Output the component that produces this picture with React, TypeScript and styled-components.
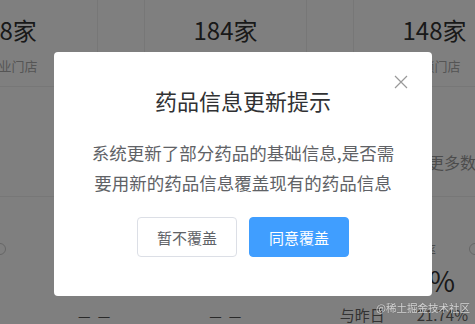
import React from 'react';
import styled, { createGlobalStyle } from 'styled-components';

const GlobalStyle = createGlobalStyle`
    html, body {
        margin: 0;
        padding: 0;
        height: 100%;
        overflow: hidden;
        background: #fff;
        font-family: "Noto Sans CJK SC", "Noto Sans", sans-serif;
    }
`;

const Page = styled.div`
    width: 475px;
    height: 324px;
    overflow: hidden;
    color: #333;
`;

const StatRow = styled.div`
    display: flex;
    gap: 46px;
    margin-left: -65px;
    height: 86px;
    border-bottom: 1px solid #eee;
`;

const StatCell = styled.div<{ $shift?: number }>`
    flex: 0 0 163px;
    box-sizing: border-box;
    border-left: 1px solid #eee;
    border-right: 1px solid #eee;
    display: flex;
    flex-direction: column;
    align-items: center;
    padding: 13px ${p => p.$shift || 0}px 0 0;
`;

const StatValue = styled.div`
    font-size: 24px;
    line-height: 34px;
    color: #333;
`;

const StatLabel = styled.div`
    margin-top: 10px;
    font-size: 13px;
    line-height: 18px;
    color: #aaa;
`;

const MoreRow = styled.div`
    height: 110px;
    border-bottom: 1px solid #eee;
    display: flex;
    align-items: center;
    padding: 40px 0 0 396px;
    box-sizing: border-box;
    font-size: 16px;
    color: #999;
    white-space: nowrap;
`;

const RateRow = styled.div`
    height: 104px;
    display: flex;
    align-items: flex-start;
    justify-content: space-between;
    padding-top: 46px;
    box-sizing: border-box;
    margin: 0 -6px;
`;

const Dot = styled.span`
    width: 12px;
    height: 12px;
    border-radius: 50%;
    border: 1px solid #ccc;
    box-sizing: border-box;
`;

const RateBlock = styled.div`
    display: flex;
    flex-direction: column;
    align-items: flex-end;
    margin-left: auto;
    margin-right: 14px;
`;

const RateTitle = styled.div`
    margin-right: 19px;
    font-size: 13px;
    line-height: 14px;
    color: #999;
`;

const RateValue = styled.div`
    margin-top: 3px;
    font-size: 28px;
    line-height: 40px;
    color: #333;
`;

const FootRow = styled.div`
    display: flex;
    align-items: center;
    font-size: 14px;
    line-height: 20px;
    color: #666;
    white-space: nowrap;
    margin-top: 4px;
`;

const Dash = styled.span<{ $left: number }>`
    margin-left: ${p => p.$left}px;
    color: #555;
    letter-spacing: 2px;
`;

const Compare = styled.span`
    margin-left: auto;
    font-size: 15px;
`;

const CompareValue = styled.span`
    margin-left: 32px;
    margin-right: 7px;
    font-size: 15px;
`;

const Watermark = styled.div`
    position: fixed;
    left: 376px;
    top: 300px;
    font-size: 10.5px;
    color: rgba(255, 255, 255, 0.75);
    text-shadow: 0 0 1px rgba(0, 0, 0, 0.4);
    z-index: 2;
`;

const Overlay = styled.div`
    position: fixed;
    inset: 0;
    background: rgba(0, 0, 0, 0.5);
    display: flex;
    align-items: flex-start;
    padding: 52px 0 0 54px;
    box-sizing: border-box;
`;

const Dialog = styled.div`
    position: relative;
    width: 378px;
    height: 244px;
    box-sizing: border-box;
    background: #fff;
    border-radius: 4px;
    padding-top: 33px;
    display: flex;
    flex-direction: column;
    align-items: center;
`;

const CloseButton = styled.button`
    position: absolute;
    top: 23px;
    right: 24px;
    width: 14px;
    height: 14px;
    padding: 0;
    border: none;
    background: none;
    display: flex;
    cursor: pointer;
`;

const Title = styled.h2`
    margin: 0;
    font-size: 22px;
    line-height: 30px;
    font-weight: 400;
    color: #303133;
`;

const Message = styled.p`
    margin: 23px 0 0;
    font-size: 17.5px;
    line-height: 30px;
    color: #606266;
    text-align: center;
    white-space: nowrap;
`;

const Footer = styled.div`
    margin-top: 19px;
    display: flex;
    gap: 12px;
`;

const Button = styled.button<{ $primary?: boolean }>`
    width: 100px;
    height: 40px;
    box-sizing: border-box;
    border-radius: 4px;
    font-family: inherit;
    font-size: 15px;
    border: 1px solid ${p => (p.$primary ? '#409eff' : '#dcdfe6')};
    background: ${p => (p.$primary ? '#409eff' : '#fff')};
    color: ${p => (p.$primary ? '#fff' : '#606266')};
    cursor: pointer;
`;

const stats = [
    { value: '68家', label: '专业门店', shift: 10 },
    { value: '184家', label: '合作门店', shift: 0 },
    { value: '148家', label: '连锁门店', shift: 0 },
];

const CloseIcon = () => (
    <svg width="14" height="14" viewBox="0 0 14 14">
        <path d="M1 1L13 13M13 1L1 13" stroke="#999" strokeWidth="1.2" fill="none" />
    </svg>
);

const App = () => {
    return (
        <Page>
            <GlobalStyle />
            <StatRow>
                {stats.map(s => (
                    <StatCell key={s.value} $shift={s.shift}>
                        <StatValue>{s.value}</StatValue>
                        <StatLabel>{s.label}</StatLabel>
                    </StatCell>
                ))}
            </StatRow>
            <MoreRow>查看更多数据</MoreRow>
            <RateRow>
                <Dot />
                <RateBlock>
                    <RateTitle>增长率</RateTitle>
                    <RateValue>21.74%</RateValue>
                </RateBlock>
                <Dot />
            </RateRow>
            <FootRow>
                <Dash $left={78}>— —</Dash>
                <Dash $left={97}>— —</Dash>
                <Compare>与昨日</Compare>
                <CompareValue>21.74%</CompareValue>
            </FootRow>
            <Overlay>
                <Dialog>
                    <CloseButton aria-label="关闭"><CloseIcon /></CloseButton>
                    <Title>药品信息更新提示</Title>
                    <Message>
                        系统更新了部分药品的基础信息,是否需<br />
                        要用新的药品信息覆盖现有的药品信息
                    </Message>
                    <Footer>
                        <Button>暂不覆盖</Button>
                        <Button $primary>同意覆盖</Button>
                    </Footer>
                </Dialog>
            </Overlay>
            <Watermark>@稀土掘金技术社区</Watermark>
        </Page>
    );
};

export default App;
